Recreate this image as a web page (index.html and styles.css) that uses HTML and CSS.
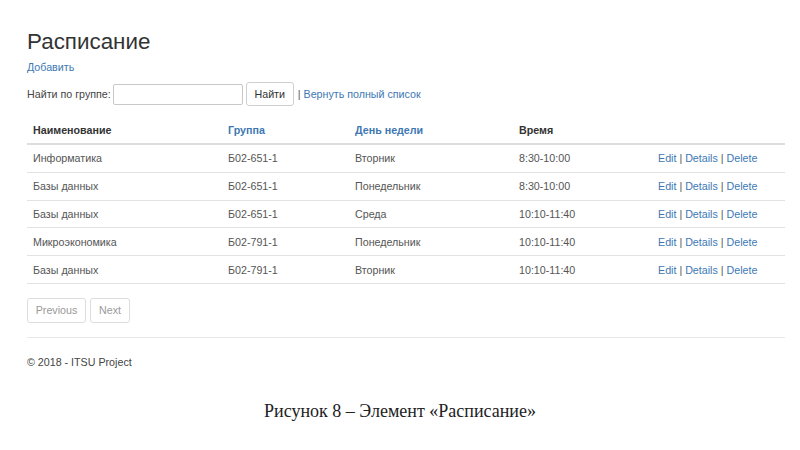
FILE: index.html
```html
<!DOCTYPE html>
<html lang="ru">
<head>
<meta charset="utf-8">
<link rel="stylesheet" href="styles.css">
</head>
<body>
<div class="page">
  <h1 class="title">Расписание</h1>
  <p class="add"><a href="#">Добавить</a></p>
  <form class="search">
    <label>Найти по группе:</label>
    <input type="text" class="field">
    <button type="button" class="btn">Найти</button>
    <span class="sep">|</span><a href="#">Вернуть полный список</a>
  </form>
  <table class="grid">
    <thead>
      <tr>
        <th class="c1">Наименование</th>
        <th class="c2"><a href="#">Группа</a></th>
        <th class="c3"><a href="#">День недели</a></th>
        <th class="c4">Время</th>
        <th class="c5"></th>
      </tr>
    </thead>
    <tbody>
      <tr><td>Информатика</td><td>Б02-651-1</td><td>Вторник</td><td>8:30-10:00</td><td><a href="#">Edit</a> | <a href="#">Details</a> | <a href="#">Delete</a></td></tr>
      <tr><td>Базы данных</td><td>Б02-651-1</td><td>Понедельник</td><td>8:30-10:00</td><td><a href="#">Edit</a> | <a href="#">Details</a> | <a href="#">Delete</a></td></tr>
      <tr><td>Базы данных</td><td>Б02-651-1</td><td>Среда</td><td>10:10-11:40</td><td><a href="#">Edit</a> | <a href="#">Details</a> | <a href="#">Delete</a></td></tr>
      <tr><td>Микроэкономика</td><td>Б02-791-1</td><td>Понедельник</td><td>10:10-11:40</td><td><a href="#">Edit</a> | <a href="#">Details</a> | <a href="#">Delete</a></td></tr>
      <tr><td>Базы данных</td><td>Б02-791-1</td><td>Вторник</td><td>10:10-11:40</td><td><a href="#">Edit</a> | <a href="#">Details</a> | <a href="#">Delete</a></td></tr>
    </tbody>
  </table>
  <div class="pager">
    <span class="pbtn prev">Previous</span>
    <span class="pbtn next">Next</span>
  </div>
  <hr class="rule">
  <footer class="foot">© 2018 - ITSU Project</footer>
</div>
<p class="caption">Рисунок 8 – Элемент «Расписание»</p>
</body>
</html>
```
FILE: styles.css
```css
html, body {
  margin: 0;
  padding: 0;
  background: #fff;
}
body {
  font-family: "Liberation Sans", Arial, sans-serif;
  font-size: 10.7px;
  color: #444;
}
a {
  color: #3d78b3;
  text-decoration: none;
}
.page {
  width: 758px;
  padding: 0 15px 0 27px;
}
.title {
  margin: 0;
  padding-top: 28px;
  font-size: 22.4px;
  font-weight: normal;
  line-height: 27px;
  color: #333;
}
.add {
  margin: 5px 0 0;
  line-height: 14px;
}
.search {
  display: flex;
  align-items: center;
  margin-top: 8px;
  height: 24px;
  color: #444;
}
.search label {
  margin-right: 2px;
}
.field {
  box-sizing: border-box;
  width: 130px;
  height: 21px;
  border: 1px solid #c8c8c8;
  border-radius: 2px;
  padding: 0 4px;
  margin: 0;
}
.btn {
  box-sizing: border-box;
  width: 48px;
  height: 24px;
  margin: 0 0 0 3px;
  border: 1px solid #cfcfcf;
  border-radius: 3px;
  background: #fff;
  font-family: inherit;
  font-size: 10.7px;
  color: #333;
  padding: 0;
}
.sep {
  margin: 0 3px 0 4px;
  color: #555;
}
.grid {
  width: 758px;
  margin-top: 11px;
  border-collapse: collapse;
}
.grid th, .grid td {
  text-align: left;
  padding: 0 6px;
}
.grid th {
  height: 26px;
  font-weight: bold;
  color: #333;
  border-bottom: 2px solid #ddd;
}
.grid td {
  height: 26.8px;
  border-bottom: 1px solid #e3e3e3;
  color: #555;
}
.c1 { width: 183px; }
.c2 { width: 115px; }
.c3 { width: 152px; }
.c4 { width: 127px; }
.pager {
  display: flex;
  gap: 4px;
  margin-top: 14px;
}
.pbtn {
  box-sizing: border-box;
  height: 25px;
  line-height: 23px;
  border: 1px solid #ddd;
  border-radius: 3px;
  color: #999;
  text-align: center;
}
.prev { width: 59px; }
.next { width: 40px; }
.rule {
  margin: 14px 0 0;
  border: 0;
  border-top: 1px solid #e8e8e8;
  height: 0;
}
.foot {
  margin-top: 17px;
  line-height: 14px;
  color: #444;
}
.caption {
  margin: 32px 0 0;
  text-align: center;
  font-family: "Liberation Serif", "Times New Roman", serif;
  font-size: 18px;
  line-height: 20px;
  color: #222;
}
```
